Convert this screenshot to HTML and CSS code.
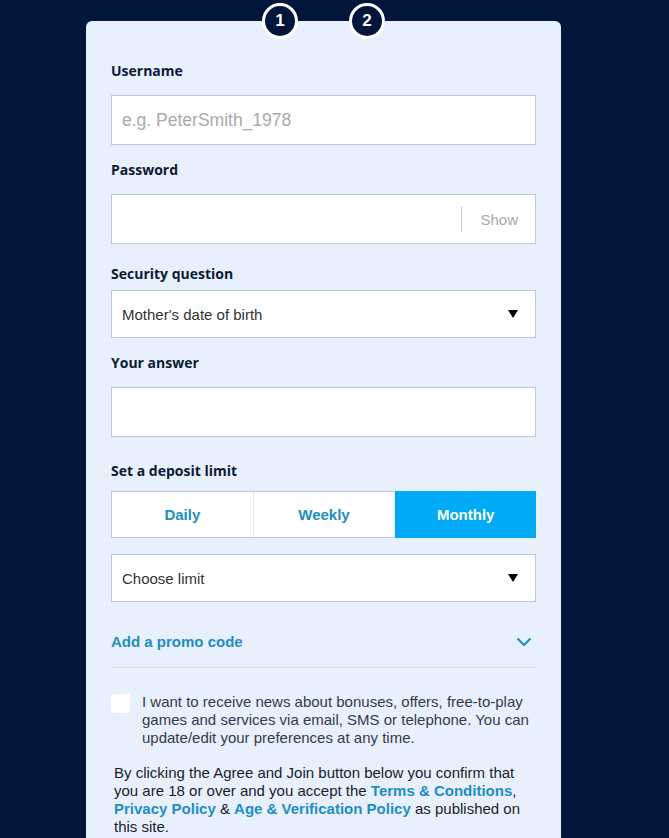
FILE: index.html
```html
<!DOCTYPE html>
<html lang="en">

<head>
  <meta charset="UTF-8">
  <meta name="viewport" content="width=device-width, initial-scale=1.0">
  <title>Join</title>
  <link rel="stylesheet" href="styles.css">
</head>

<body>
  <div class="card">
    <!-- Step markers -->
    <div class="steps">
      <span class="step">1</span>
      <span class="step">2</span>
    </div>

    <form class="joinForm">
      <label class="fieldLabel" for="username">Username</label>
      <input class="textInput" type="text" id="username" placeholder="e.g. PeterSmith_1978">

      <label class="fieldLabel" for="password">Password</label>
      <div class="passwordBox">
        <input class="passwordInput" type="password" id="password">
        <span class="showToggle">Show</span>
      </div>

      <label class="fieldLabel labelSelect" for="question">Security question</label>
      <div class="selectBox">
        <span>Mother's date of birth</span>
        <span class="selectArrow"></span>
      </div>

      <label class="fieldLabel labelAnswer" for="answer">Your answer</label>
      <input class="textInput" type="text" id="answer">

      <div class="fieldLabel labelLimit">Set a deposit limit</div>
      <div class="periodTabs">
        <button type="button" class="periodTab">Daily</button>
        <button type="button" class="periodTab">Weekly</button>
        <button type="button" class="periodTab active">Monthly</button>
      </div>

      <div class="selectBox limitSelect">
        <span>Choose limit</span>
        <span class="selectArrow"></span>
      </div>

      <!-- Promo code -->
      <div class="promoRow">
        <span>Add a promo code</span>
        <svg width="16" height="10" viewBox="0 0 16 10">
          <path d="M1.5 1.5 L8 8 L14.5 1.5" fill="none" stroke="#1e8ec2" stroke-width="2.2" />
        </svg>
      </div>

      <div class="newsRow">
        <span class="checkBox"></span>
        <p>I want to receive news about bonuses, offers, free-to-play games and services via email, SMS or telephone. You can update/edit your preferences at any time.</p>
      </div>

      <p class="terms">By clicking the Agree and Join button below you confirm that you are 18 or over and you accept the <a href="#">Terms &amp; Conditions</a>, <a href="#">Privacy Policy</a> &amp; <a href="#">Age &amp; Verification Policy</a> as published on this site.</p>
    </form>
  </div>
</body>

</html>
```

FILE: styles.css
```css
/* Page */
body {
  margin: 0;
  background-color: #02163b;
  font-family: 'Liberation Sans', Arial, sans-serif;
  height: 838px;
  overflow: hidden;
}

/* Card */
.card {
  width: 475px;
  margin: 21px 0 0 86px;
  background-color: #e8f0fd;
  border-radius: 6px;
  min-height: 900px;
  box-sizing: border-box;
  padding: 0 25px;
}

/* Step markers */
.steps {
  display: flex;
  justify-content: center;
  gap: 51px;
  height: 0;
}

.step {
  width: 30px;
  height: 30px;
  margin-top: -18px;
  border: 3px solid #ffffff;
  border-radius: 50%;
  background-color: #02163b;
  color: #ffffff;
  font-weight: bold;
  font-size: 17px;
  display: flex;
  align-items: center;
  justify-content: center;
}

/* Form */
.joinForm {
  display: flex;
  flex-direction: column;
  padding-top: 41px;
}

.fieldLabel {
  font-family: 'Open Sans', sans-serif;
  font-weight: 700;
  font-size: 14px;
  color: #0c1a36;
  line-height: 18px;
  margin-bottom: 15px;
}

.textInput,
.passwordBox {
  height: 50px;
  box-sizing: border-box;
  border: 1px solid #bac8de;
  background-color: #ffffff;
  margin-bottom: 16px;
}

.textInput {
  padding: 0 10px;
  font-family: 'Liberation Sans', Arial, sans-serif;
  font-size: 17.5px;
  color: #333;
  outline: none;
}

.textInput::placeholder {
  color: #a9a9a9;
}

.passwordBox {
  display: flex;
  align-items: center;
  margin-bottom: 21px;
}

.passwordInput {
  flex: 1;
  height: 100%;
  border: none;
  outline: none;
  background: transparent;
}

.showToggle {
  border-left: 1px solid #c9c9c9;
  height: 25px;
  line-height: 25px;
  padding: 0 17px 0 18px;
  font-size: 15px;
  color: #a9a9a9;
}

.selectBox {
  height: 48px;
  box-sizing: border-box;
  border: 1px solid #bac8de;
  background-color: #ffffff;
  display: flex;
  align-items: center;
  justify-content: space-between;
  padding: 0 17px 0 10px;
  font-size: 15px;
  color: #333;
}

.selectArrow {
  width: 0;
  height: 0;
  border-left: 5px solid transparent;
  border-right: 5px solid transparent;
  border-top: 8px solid #000000;
}

.labelSelect {
  margin-bottom: 7px;
}

.labelAnswer {
  margin-top: 16px;
}

.labelLimit {
  margin-top: 9px;
  margin-bottom: 11px;
}

/* Deposit period tabs */
.periodTabs {
  display: flex;
  height: 47px;
  border: 1px solid #bac8de;
  box-sizing: border-box;
  background-color: #ffffff;
  margin-bottom: 16px;
}

.periodTab {
  flex: 1;
  border: none;
  border-left: 1px solid #e3e8f0;
  background: transparent;
  font-family: 'Liberation Sans', Arial, sans-serif;
  font-weight: bold;
  font-size: 15px;
  color: #1e8ec2;
  cursor: pointer;
}

.periodTab:first-child {
  border-left: none;
}

.periodTab.active {
  background-color: #00aaf5;
  color: #ffffff;
  margin: -1px -1px -1px 0;
}

/* Promo code */
.promoRow {
  display: flex;
  justify-content: space-between;
  align-items: center;
  margin-top: 31px;
  padding: 0 4px 17px 0;
  border-bottom: 1px solid #cfd9e8;
  font-weight: bold;
  font-size: 15px;
  color: #1e8ec2;
}

/* Marketing consent */
.newsRow {
  display: flex;
  gap: 12px;
  margin-top: 25px;
}

.checkBox {
  flex-shrink: 0;
  width: 19px;
  height: 19px;
  background-color: #ffffff;
  border-radius: 2px;
  margin-top: 1px;
}

.newsRow p {
  margin: 0;
  font-size: 15px;
  line-height: 18px;
  color: #333b4a;
}

.terms {
  margin: 17px 0 0 3px;
  font-size: 15px;
  line-height: 18px;
  color: #1a1d2a;
}

.terms a {
  color: #1e8ec2;
  font-weight: bold;
  text-decoration: none;
}
```
